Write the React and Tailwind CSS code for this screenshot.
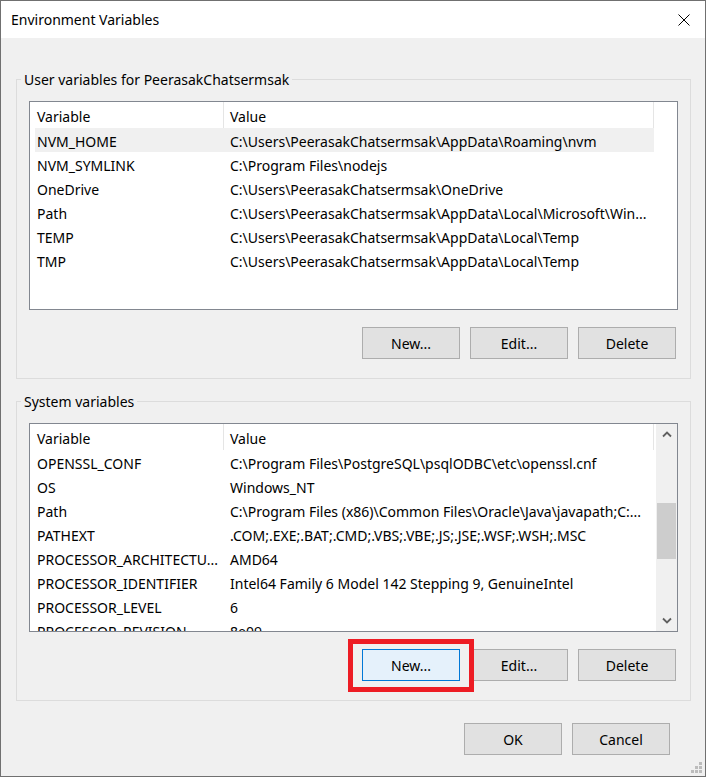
import React from "react";

const userVars = [
  ["NVM_HOME", "C:\\Users\\PeerasakChatsermsak\\AppData\\Roaming\\nvm"],
  ["NVM_SYMLINK", "C:\\Program Files\\nodejs"],
  ["OneDrive", "C:\\Users\\PeerasakChatsermsak\\OneDrive"],
  ["Path", "C:\\Users\\PeerasakChatsermsak\\AppData\\Local\\Microsoft\\Win..."],
  ["TEMP", "C:\\Users\\PeerasakChatsermsak\\AppData\\Local\\Temp"],
  ["TMP", "C:\\Users\\PeerasakChatsermsak\\AppData\\Local\\Temp"],
];

const systemVars = [
  ["OPENSSL_CONF", "C:\\Program Files\\PostgreSQL\\psqlODBC\\etc\\openssl.cnf"],
  ["OS", "Windows_NT"],
  ["Path", "C:\\Program Files (x86)\\Common Files\\Oracle\\Java\\javapath;C:..."],
  ["PATHEXT", ".COM;.EXE;.BAT;.CMD;.VBS;.VBE;.JS;.JSE;.WSF;.WSH;.MSC"],
  ["PROCESSOR_ARCHITECTU...", "AMD64"],
  ["PROCESSOR_IDENTIFIER", "Intel64 Family 6 Model 142 Stepping 9, GenuineIntel"],
  ["PROCESSOR_LEVEL", "6"],
  ["PROCESSOR_REVISION", "8e09"],
];

function Button({ children, focused }) {
  return (
    <button
      className={`h-[32px] w-[98px] border text-[14px] text-black ${
        focused
          ? "border-[#0078d7] bg-[#e5f1fb]"
          : "border-[#adadad] bg-[#e1e1e1]"
      }`}
    >
      {children}
    </button>
  );
}

function Chevron({ down }) {
  return (
    <svg width="10" height="7" viewBox="0 0 10 7">
      <polyline
        points={down ? "1,1.5 5,5.5 9,1.5" : "1,5.5 5,1.5 9,5.5"}
        fill="none"
        stroke="#606060"
        strokeWidth="1.8"
      />
    </svg>
  );
}

function Scrollbar() {
  return (
    <div className="flex w-[21px] flex-col bg-[#f0f0f0]">
      <div className="flex h-[21px] items-center justify-center">
        <Chevron />
      </div>
      <div className="flex-1">
        <div className="mx-[1px] mt-[58px] h-[56px] bg-[#cdcdcd]" />
      </div>
      <div className="flex h-[21px] items-center justify-center">
        <Chevron down />
      </div>
    </div>
  );
}

function VarList({ rows, selected, scroll }) {
  return (
    <div className="flex h-[209px] overflow-hidden border border-[#828790] bg-white">
      <div className="w-[624px]">
        <div className="flex h-[26px] items-center">
          <span className="w-[193px] pl-[7px] pt-[2px]">Variable</span>
          <span className="h-full w-px bg-[#e5e5e5]" />
          <span className="w-[429px] pl-[6px] pt-[2px]">Value</span>
          <span className="h-full w-px bg-[#e5e5e5]" />
        </div>
        {rows.map(([name, value], i) => (
          <div
            key={name + i}
            className={`ml-[5px] flex h-[24px] w-[619px] items-center whitespace-nowrap pt-[2px] ${
              i === selected ? "bg-[#f0f0f0]" : ""
            }`}
          >
            <span className="w-[189px] overflow-hidden pl-[2px]">{name}</span>
            <span className="w-[430px] overflow-hidden pl-[6px]">{value}</span>
          </div>
        ))}
      </div>
      <div className="flex flex-1 justify-end">{scroll && <Scrollbar />}</div>
    </div>
  );
}

function Group({ title, children }) {
  return (
    <fieldset className="border border-[#dcdcdc] px-[4px] pb-[19px]">
      <legend className="px-[3px] pt-[1px] leading-[19px]">{title}</legend>
      <div className="px-[8px] pt-[12px]">{children}</div>
    </fieldset>
  );
}

export default function App() {
  return (
    <div
      className="relative flex h-[777px] w-[706px] flex-col border border-[#707070] bg-[#f0f0f0] text-[14px] text-black"
      style={{ fontFamily: '"Noto Sans", "Open Sans", sans-serif' }}
    >
      {/* title bar */}
      <div className="flex h-[37px] items-center justify-between bg-white pl-[10px] pr-[15px]">
        <span>Environment Variables</span>
        <svg width="12" height="12" viewBox="0 0 12 12">
          <path d="M0.5 0.5 L11.5 11.5 M11.5 0.5 L0.5 11.5" stroke="#000" strokeWidth="1" />
        </svg>
      </div>

      <div className="flex flex-1 flex-col pl-[15px] pr-[14px] pt-[31px]">
        <Group title="User variables for PeerasakChatsermsak">
          <VarList rows={userVars} selected={0} />
          <div className="mt-[17px] flex justify-end gap-[10px] pr-[2px]">
            <Button>New...</Button>
            <Button>Edit...</Button>
            <Button>Delete</Button>
          </div>
        </Group>

        <div className="mt-[12px]">
          <Group title="System variables">
            <VarList rows={systemVars} scroll />
            <div className="mt-[17px] flex justify-end gap-[10px] pr-[2px]">
              <span className="relative flex">
                <Button focused>New...</Button>
                {/* red callout around the button */}
                <span className="pointer-events-none absolute -bottom-[11px] -left-[14px] -right-[14px] -top-[10px] z-10 border-[5px] border-[#ed1c24]" />
              </span>
              <Button>Edit...</Button>
              <Button>Delete</Button>
            </div>
          </Group>
        </div>

        <div className="mt-[22px] flex justify-end gap-[10px] pr-[21px]">
          <Button>OK</Button>
          <Button>Cancel</Button>
        </div>
      </div>

      {/* resize grip */}
      <svg className="absolute bottom-[3px] right-[3px]" width="11" height="11" viewBox="0 0 11 11">
        <g fill="#bcbcbc">
          <rect x="8" y="0" width="3" height="3" />
          <rect x="4" y="4" width="3" height="3" />
          <rect x="8" y="4" width="3" height="3" />
          <rect x="0" y="8" width="3" height="3" />
          <rect x="4" y="8" width="3" height="3" />
          <rect x="8" y="8" width="3" height="3" />
        </g>
      </svg>
    </div>
  );
}
